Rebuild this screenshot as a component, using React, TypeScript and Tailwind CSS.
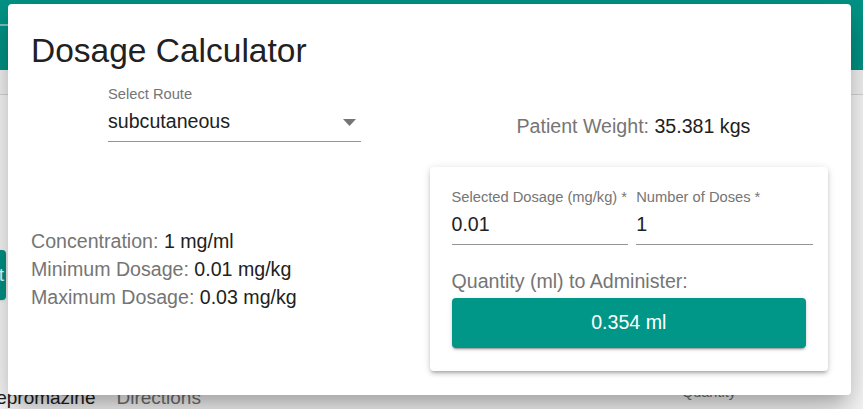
import React from 'react';

const font = { fontFamily: '"Liberation Sans", Arial, sans-serif' };

function InfoLine({ label, value }: { label: string; value: string }) {
  return (
    <div className="leading-[28px]">
      <span className="text-[#757575]">{label}: </span>
      <span className="text-[#212121]">{value}</span>
    </div>
  );
}

function TextField({ label, value }: { label: string; value: string }) {
  return (
    <div className="flex flex-col">
      <label className="text-[14.7px] leading-none text-[#757575]">{label}</label>
      <div className="mt-[7.5px] border-b border-[#949494] pb-[7.8px] text-[19.6px] leading-[24px] text-[#212121]">
        {value}
      </div>
    </div>
  );
}

function Background() {
  return (
    <div className="flex h-[409px] flex-col overflow-hidden bg-white">
      <div className="h-[70px] shrink-0 bg-[#009688] pt-[24px]">
        <div className="h-[2px] w-[20px] bg-[#7cc6bf]" />
      </div>
      <div className="h-[25px] shrink-0 border-b border-[#dcdcdc] bg-[#fafafa]" />
      <div className="mt-[155px] flex h-[50px] w-[60px] shrink-0 -ml-[54px] items-center justify-end rounded bg-[#009688] pr-[2px] text-[19px] text-white shadow">
        Set
      </div>
      <div className="mt-[83px] flex shrink-0">
        <div className="-ml-[26px] mt-[3.4px] text-[19px] leading-[24px] text-[#212121]">Acepromazine</div>
        <div className="ml-[21px] mt-[3.4px] text-[19px] leading-[24px] text-[#757575]">Directions</div>
        <div className="ml-[481px] text-[14.5px] leading-[18px] text-[#757575]">Quantity</div>
      </div>
    </div>
  );
}

export default function App() {
  return (
    <div className="relative h-[409px] w-[863px] overflow-hidden" style={font}>
      <Background />

      <div className="absolute left-[8px] top-[4px] h-[391px] w-[843px] rounded-[4px] bg-white px-[23px] pt-[27px] shadow-[0px_11px_15px_-7px_rgba(0,0,0,0.2),0px_24px_38px_3px_rgba(0,0,0,0.14),0px_9px_46px_8px_rgba(0,0,0,0.12)]">
        <h2 className="text-[33.5px] leading-[40px] text-[#212121]">Dosage Calculator</h2>

        <div className="mt-[16px] grid grid-cols-2 items-end">
          <div className="ml-[77px] flex w-[253px] flex-col">
            <label className="text-[14.7px] leading-none text-[#757575]">Select Route</label>
            <div className="mt-[7.5px] flex items-center border-b border-[#949494] pb-[7.8px]">
              <span className="flex-1 text-[19.6px] leading-[24px] text-[#212121]">subcutaneous</span>
              <svg width="13" height="7" viewBox="0 0 13 7" className="mr-[5px] mt-[3px]">
                <path d="M0 0 L13 0 L6.5 7 Z" fill="#757575" />
              </svg>
            </div>
          </div>
          <div className="mb-[4px] ml-[87px] text-[19.6px] leading-[24px]">
            <span className="text-[#757575]">Patient Weight: </span>
            <span className="text-[#212121]">35.381 kgs</span>
          </div>
        </div>

        <div className="mt-[25px] grid grid-cols-2">
          <div className="flex flex-col justify-center text-[19.6px]">
            <InfoLine label="Concentration" value="1 mg/ml" />
            <InfoLine label="Minimum Dosage" value="0.01 mg/kg" />
            <InfoLine label="Maximum Dosage" value="0.03 mg/kg" />
          </div>

          <div className="rounded-[4px] bg-white pb-[23px] pl-[22px] pr-[15px] pt-[23px] shadow-[0px_3px_3px_-2px_rgba(0,0,0,0.2),0px_3px_4px_0px_rgba(0,0,0,0.14),0px_1px_8px_0px_rgba(0,0,0,0.12)]">
            <div className="grid grid-cols-2 gap-[8px]">
              <TextField label="Selected Dosage (mg/kg) *" value="0.01" />
              <TextField label="Number of Doses *" value="1" />
            </div>
            <div className="mt-[24px] text-[19.6px] leading-[24px] text-[#757575]">Quantity (ml) to Administer:</div>
            <button className="mr-[7px] mt-[5px] flex h-[50px] w-[calc(100%-7px)] items-center justify-center rounded-[4px] bg-[#009688] text-[19.6px] text-white shadow-[0px_3px_1px_-2px_rgba(0,0,0,0.2),0px_2px_2px_0px_rgba(0,0,0,0.14),0px_1px_5px_0px_rgba(0,0,0,0.12)]">
              0.354 ml
            </button>
          </div>
        </div>
      </div>
    </div>
  );
}
